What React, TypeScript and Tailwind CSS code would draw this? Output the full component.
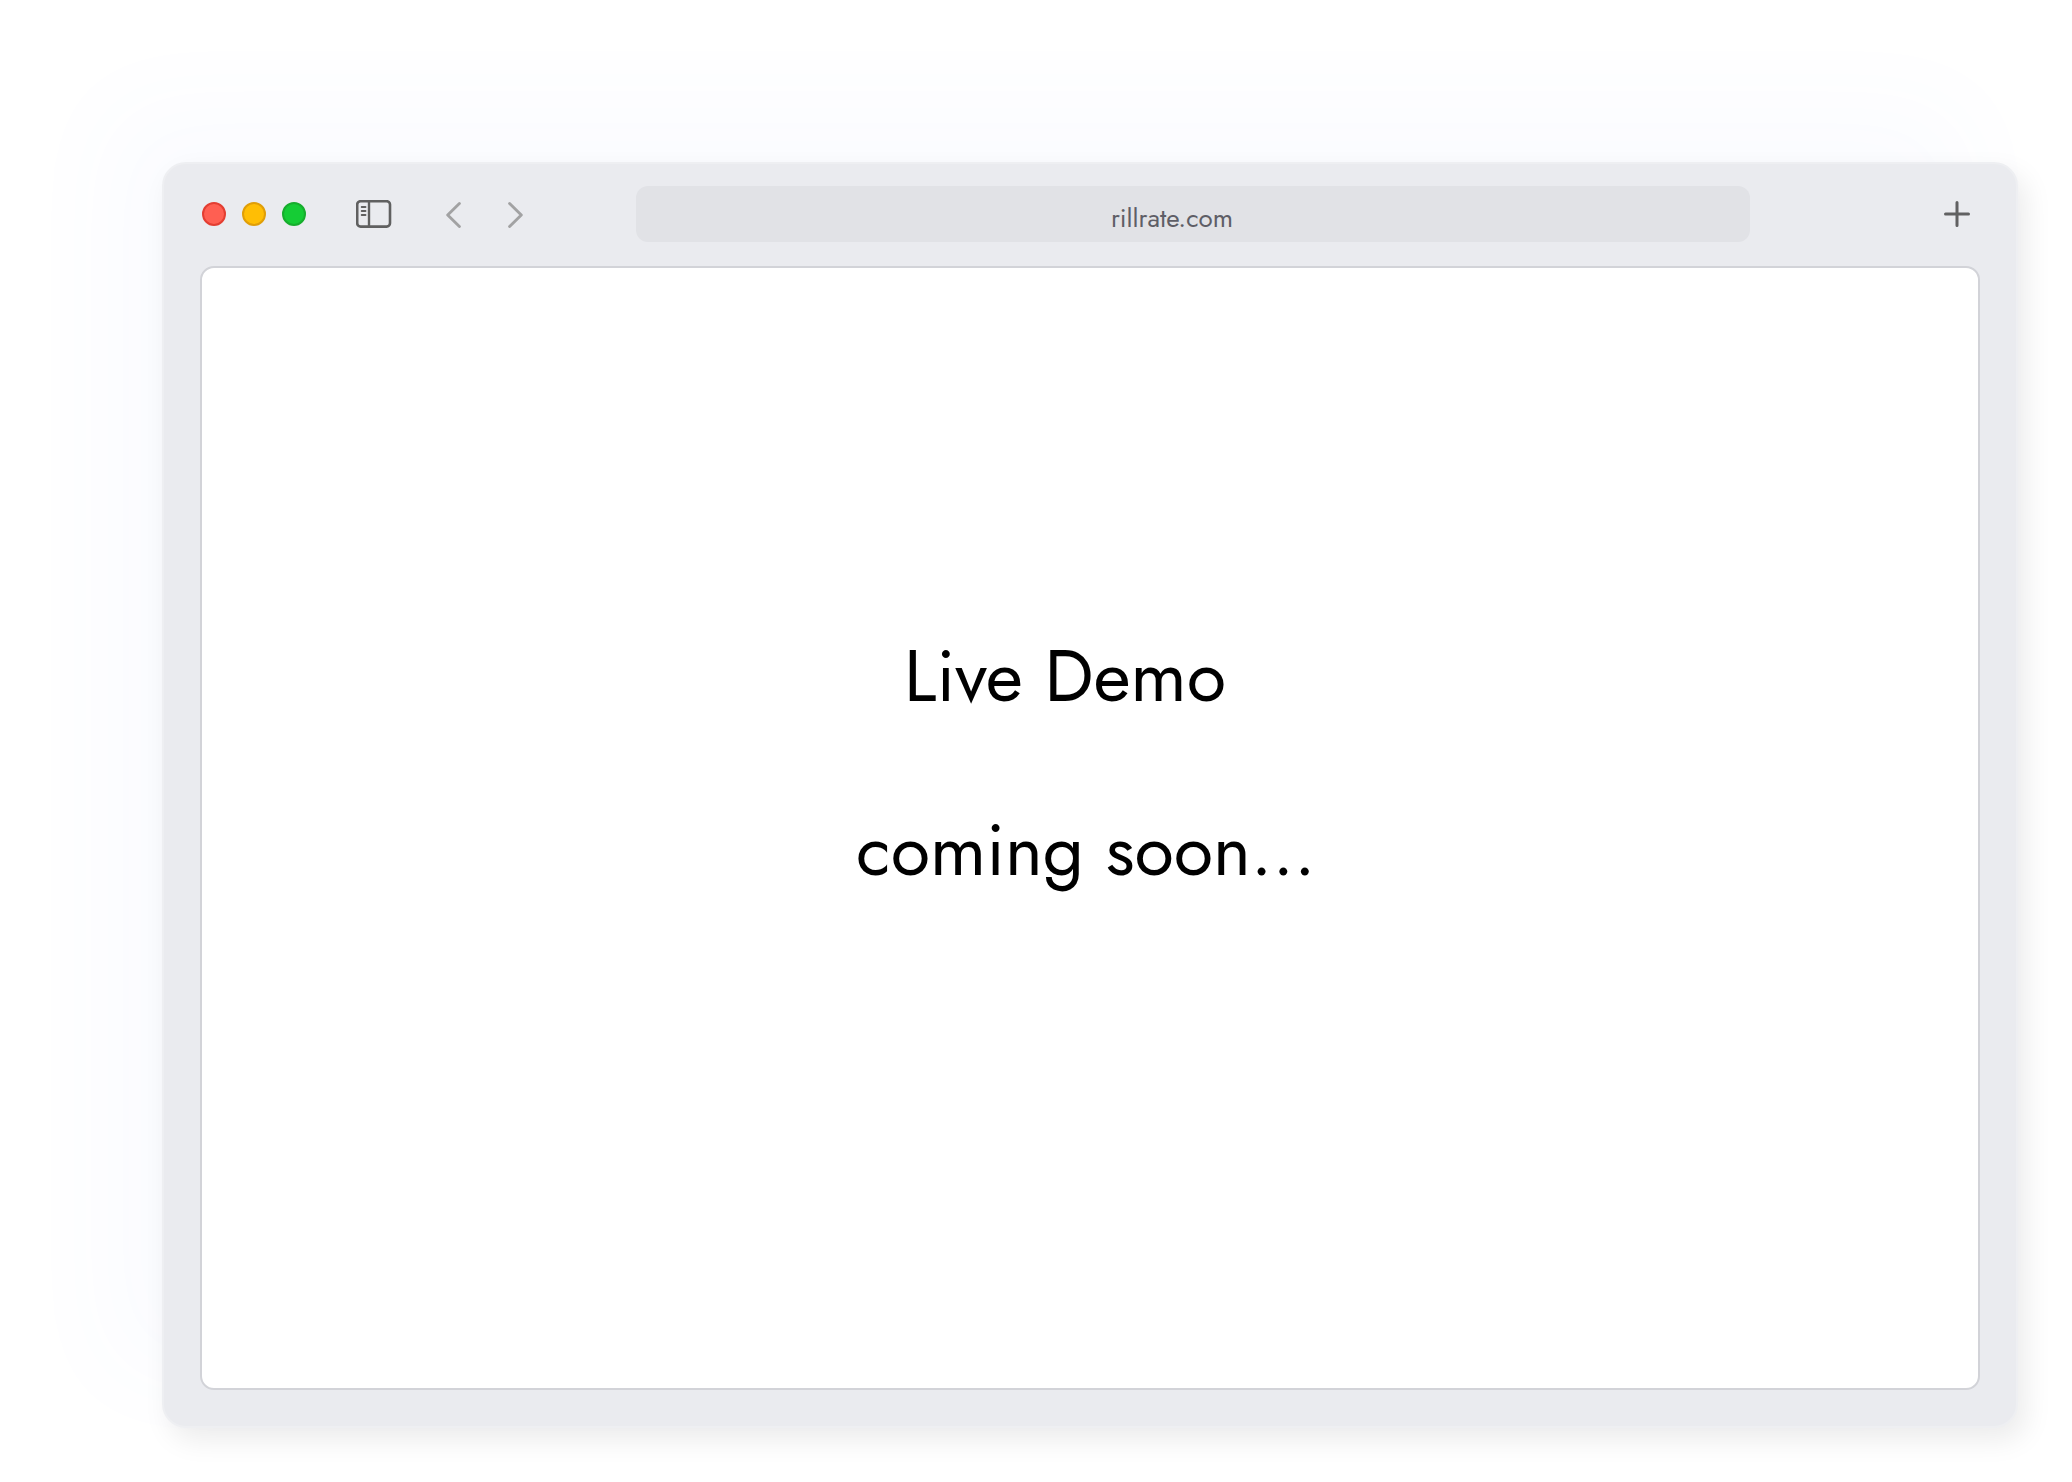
import React from "react";

function TrafficLights() {
  return (
    <div className="flex gap-4">
      <button aria-label="Close" className="size-6 rounded-full border-2 border-[#e33e32] bg-[#ff5f52]" />
      <button aria-label="Minimize" className="size-6 rounded-full border-2 border-[#e09e08] bg-[#ffbe05]" />
      <button aria-label="Maximize" className="size-6 rounded-full border-2 border-[#17ad2d] bg-[#15cc35]" />
    </div>
  );
}

function SidebarIcon() {
  return (
    <svg width="36" height="28" viewBox="0 0 36 28" fill="none" stroke="#606060">
      <rect x="1.2" y="1.2" width="32.8" height="25.4" rx="3.4" strokeWidth="2.6" />
      <path d="M13 1v25.5" strokeWidth="2.4" />
      <path d="M5.7 7h3.8M5.7 11h3.8M5.7 15h3.8" strokeWidth="1.9" strokeLinecap="round" />
    </svg>
  );
}

function Chevron({ d }: { d: string }) {
  return (
    <svg width="16" height="28" viewBox="0 0 16 28" fill="none" stroke="#a2a2a3" strokeWidth="2.9" strokeLinecap="round" strokeLinejoin="round">
      <path d={d} />
    </svg>
  );
}

function Toolbar() {
  return (
    <header className="flex items-center pt-[22px] pr-[46px] pb-6 pl-[38px]">
      <TrafficLights />
      <button aria-label="Toggle sidebar" className="ml-[50px]">
        <SidebarIcon />
      </button>
      <button aria-label="Back" className="ml-[54px]">
        <Chevron d="M13.4 3.5 1.7 15l11.7 11.5" />
      </button>
      <button aria-label="Forward" className="ml-[46px]">
        <Chevron d="M1.6 3.5 13.3 15 1.6 26.5" />
      </button>
      <input
        aria-label="Address"
        defaultValue="rillrate.com"
        className="ml-28 h-14 min-w-0 flex-1 rounded-xl bg-[#e1e2e6] pt-2 pr-[42px] text-center text-[26px] text-[#5e5e66] outline-none"
      />
      <button aria-label="New tab" className="ml-[194px]">
        <svg width="26" height="26" viewBox="0 0 26 26" fill="none" stroke="#616162" strokeWidth="3" strokeLinecap="round">
          <path d="M13 1.5v23M1.5 13h23" />
        </svg>
      </button>
    </header>
  );
}

export default function App() {
  return (
    <div className="flex min-h-screen bg-white pt-[162px] pr-[54px] pb-[54px] pl-[162px] font-['Jost','Lato',sans-serif]">
      <div className="flex flex-1 flex-col rounded-3xl border-2 border-[#eeeff2] bg-[#eaebef] shadow-[8px_12px_28px_rgba(0,0,0,0.08),-54px_-54px_100px_rgba(90,120,255,0.03)]">
        <Toolbar />
        <main className="mx-9 mb-9 flex flex-1 flex-col items-center justify-center rounded-[14px] border-2 border-[#d2d3d8] bg-white pb-[130px] text-7xl leading-[174px] text-black">
          <h1 className="pr-[50px]">Live Demo</h1>
          <p className="pr-2">coming soon...</p>
        </main>
      </div>
    </div>
  );
}
